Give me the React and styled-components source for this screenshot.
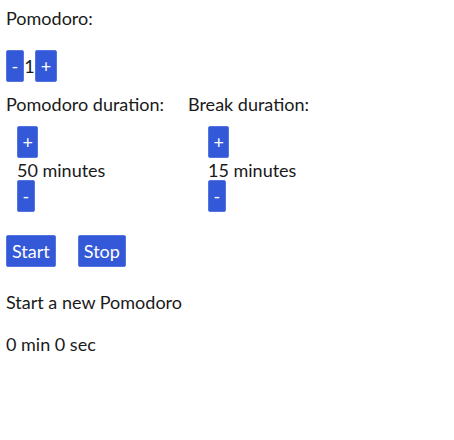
import styled, { createGlobalStyle } from "styled-components";

const GlobalStyle = createGlobalStyle`
  body {
    margin: 7px 6px;
    font-family: Lato, "Liberation Sans", sans-serif;
    font-size: 18px;
    color: #1a1a1a;
    background: #fff;
  }
`;

const Page = styled.div`
  display: flex;
  flex-direction: column;
  align-items: flex-start;
`;

const Line = styled.div`
  line-height: 22px;
  margin-top: ${({ $top }) => $top || 0}px;
`;

const Row = styled.div`
  display: flex;
  align-items: center;
  gap: ${({ $gap }) => $gap || 0}px;
  margin-top: ${({ $top }) => $top || 0}px;
`;

const Button = styled.button`
  font-family: Lato, "Liberation Sans", sans-serif;
  font-size: 18px;
  line-height: 20px;
  color: #fff;
  background: #3358d8;
  border: 1px solid #5475e0;
  border-radius: 2px;
  padding: 5px ${({ $big }) => ($big ? 5 : 4.5)}px;
  height: 32px;
  cursor: pointer;
`;

const Count = styled.span`
  padding: 0 0.5px;
`;

const Durations = styled.div`
  display: grid;
  grid-template-columns: 182px auto;
  margin-top: 11px;
`;

const Setting = styled.div`
  display: flex;
  flex-direction: column;
  align-items: flex-start;
`;

const Controls = styled.div`
  display: flex;
  flex-direction: column;
  align-items: flex-start;
  margin: 11px 0 0 ${({ $indent }) => $indent}px;
`;

const Value = styled.div`
  line-height: 20px;
  margin: 2px 0 0;
`;

function DurationSetting({ label, value, indent }) {
  return (
    <Setting>
      <Line>{label}</Line>
      <Controls $indent={indent}>
        <Button>+</Button>
        <Value>{value} minutes</Value>
        <Button>-</Button>
      </Controls>
    </Setting>
  );
}

export default function App() {
  return (
    <>
      <GlobalStyle />
      <Page>
        <Line>Pomodoro:</Line>
        <Row $top={21}>
          <Button>-</Button>
          <Count>1</Count>
          <Button>+</Button>
        </Row>
        <Durations>
          <DurationSetting label="Pomodoro duration:" value={50} indent={11} />
          <DurationSetting label="Break duration:" value={15} indent={20} />
        </Durations>
        <Row $top={23} $gap={22}>
          <Button $big>Start</Button>
          <Button $big>Stop</Button>
        </Row>
        <Line $top={24}>Start a new Pomodoro</Line>
        <Line $top={20}>0 min 0 sec</Line>
      </Page>
    </>
  );
}
